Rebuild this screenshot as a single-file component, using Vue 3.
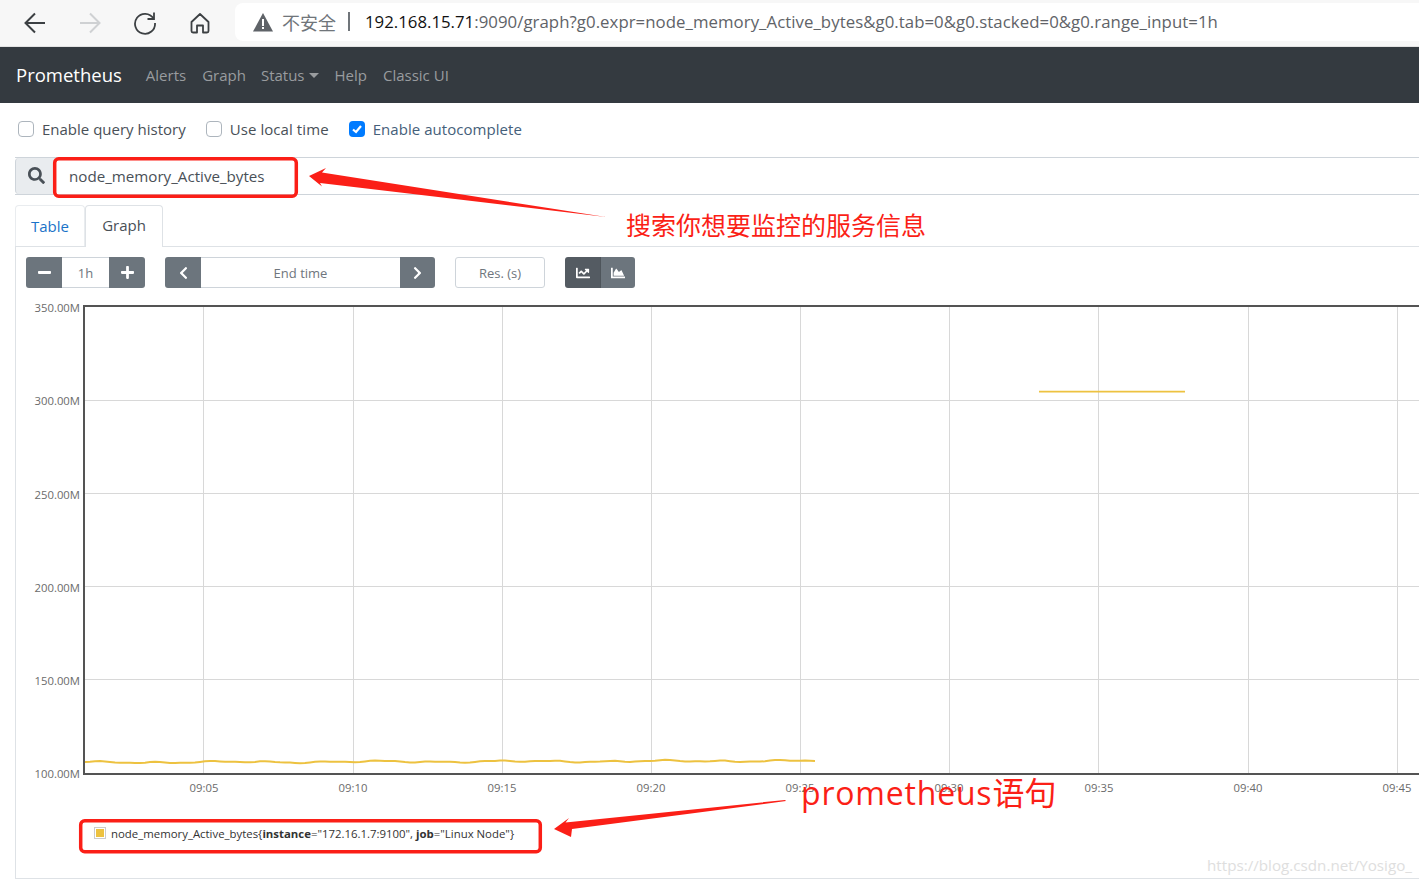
<script setup>
const gridX = [203, 353, 502, 651, 800, 949, 1098, 1248, 1397]
const gridY = [400, 493, 586, 679]
const yLabels = [
  { t: '350.00M', y: 307 }, { t: '300.00M', y: 400 }, { t: '250.00M', y: 494 },
  { t: '200.00M', y: 587 }, { t: '150.00M', y: 680 }, { t: '100.00M', y: 773 }
]
const xLabels = [
  { t: '09:05', x: 204 }, { t: '09:10', x: 353 }, { t: '09:15', x: 502 }, { t: '09:20', x: 651 },
  { t: '09:25', x: 800 }, { t: '09:30', x: 949 }, { t: '09:35', x: 1099 }, { t: '09:40', x: 1248 }, { t: '09:45', x: 1397 }
]
const pts = []
for (let x = 85; x <= 816; x += 5) {
  const rise = (x - 85) / 731 * 1.6
  const y = 762.4 - rise + 0.6 * Math.sin(x / 9) + 0.5 * Math.sin(x / 23 + 1) + 0.3 * Math.sin(x / 4.3)
  pts.push(x + ',' + y.toFixed(1))
}
const seriesPath = 'M' + pts.join(' L')
const navLinks = ['Alerts', 'Graph']
</script>

<template>
  <div class="page">
    <header class="chrome">
      <div class="chrome-btns">
        <svg class="ci" viewBox="0 0 24 24" fill="none" stroke="#3c4043" stroke-width="2"><path d="M22 12H2.500M12 2.500 2.500 12l9.500 9.500"/></svg>
        <svg class="ci" viewBox="0 0 24 24" fill="none" stroke="#cfd1d3" stroke-width="2"><path d="M2 12h19.500M12 2.500l9.500 9.500-9.500 9.500"/></svg>
        <svg class="ci" viewBox="0 0 24 24" fill="none" stroke="#3c4043" stroke-width="1.800"><path d="M20.500 7.500A10 10 0 1 0 22 12"/><path d="M21 1.500v6.500h-6.500"/></svg>
        <svg class="ci" viewBox="0 0 24 24" fill="none" stroke="#3c4043" stroke-width="1.800" stroke-linejoin="round"><path d="M3.500 11 12 3l8.500 8v9a1.500 1.500 0 0 1-1.500 1.500H15v-7H9v7H5A1.500 1.500 0 0 1 3.500 20z"/></svg>
      </div>
      <div class="omnibox">
        <svg class="warn" viewBox="0 0 20 20"><path d="M10 1 20 19.500H0z" fill="#5f6368"/><path d="M9 7h2v7H9zM9 15h2v2H9z" fill="#fff"/></svg>
        <span class="insecure">不安全</span>
        <span class="sep"></span>
        <span class="url"><span class="host">192.168.15.71</span>:9090/graph?g0.expr=node_memory_Active_bytes&amp;g0.tab=0&amp;g0.stacked=0&amp;g0.range_input=1h</span>
      </div>
    </header>

    <nav class="navbar">
      <span class="brand">Prometheus</span>
      <a v-for="l in navLinks" :key="l" class="nav-link">{{ l }}</a>
      <a class="nav-link status">Status<i class="caret"></i></a>
      <a class="nav-link">Help</a>
      <a class="nav-link">Classic UI</a>
    </nav>

    <main class="main">
      <div class="options">
        <label class="opt"><span class="box"></span>Enable query history</label>
        <label class="opt wide"><span class="box"></span>Use local time</label>
        <label class="opt on">
          <span class="box checked"><svg viewBox="0 0 16 16" width="16" height="16" fill="none" stroke="#fff" stroke-width="2.200"><path d="M4 8.500 7 11l5-6"/></svg></span>Enable autocomplete
        </label>
      </div>

      <div class="query">
        <div class="prepend">
          <svg class="fa" width="17" height="17" viewBox="0 0 512 512"><path fill="#495057" d="M505 442.700L405.300 343c-4.500-4.500-10.600-7-17-7H372c27.600-35.300 44-79.700 44-128C416 93.100 322.900 0 208 0S0 93.100 0 208s93.100 208 208 208c48.300 0 92.700-16.400 128-44v16.300c0 6.400 2.500 12.500 7 17l99.700 99.700c9.400 9.400 24.600 9.400 33.900 0l28.300-28.300c9.400-9.400 9.400-24.600.1-34zM208 336c-70.700 0-128-57.200-128-128 0-70.700 57.200-128 128-128 70.700 0 128 57.200 128 128 0 70.700-57.200 128-128 128z"/></svg>
        </div>
        <div class="expr">node_memory_Active_bytes</div>
      </div>

      <div class="tabs">
        <a class="tab">Table</a>
        <a class="tab active">Graph</a>
      </div>

      <section class="pane">
        <div class="toolbar">
          <div class="group g1">
            <button class="btn sq"><svg width="13" height="15" viewBox="0 0 448 512"><path fill="#fff" d="M416 208H32c-17.670 0-32 14.330-32 32v32c0 17.670 14.330 32 32 32h384c17.670 0 32-14.330 32-32v-32c0-17.670-14.330-32-32-32z"/></svg></button>
            <span class="field w47">1h</span>
            <button class="btn sq"><svg width="13" height="15" viewBox="0 0 448 512"><path fill="#fff" d="M416 208H272V64c0-17.670-14.330-32-32-32h-32c-17.670 0-32 14.330-32 32v144H32c-17.670 0-32 14.330-32 32v32c0 17.670 14.330 32 32 32h144v144c0 17.670 14.330 32 32 32h32c17.670 0 32-14.330 32-32V304h144c17.670 0 32-14.330 32-32v-32c0-17.670-14.330-32-32-32z"/></svg></button>
          </div>
          <div class="group g2">
            <button class="btn sq"><svg width="11" height="14" viewBox="0 0 320 512"><path fill="#fff" d="M34.520 239.030L228.870 44.690c9.370-9.370 24.570-9.370 33.940 0l22.670 22.670c9.360 9.360 9.370 24.520.04 33.900L131.490 256l154.020 154.750c9.340 9.380 9.320 24.540-.04 33.900l-22.670 22.670c-9.370 9.370-24.570 9.370-33.940 0L34.520 272.970c-9.370-9.370-9.370-24.570 0-33.940z"/></svg></button>
            <span class="field w199">End time</span>
            <button class="btn sq last"><svg width="11" height="14" viewBox="0 0 320 512"><path fill="#fff" d="M285.476 272.971L91.132 467.314c-9.373 9.373-24.569 9.373-33.941 0l-22.667-22.667c-9.357-9.357-9.375-24.522-.04-33.901L188.505 256 34.484 101.255c-9.335-9.379-9.317-24.544.04-33.901l22.667-22.667c9.373-9.373 24.569-9.373 33.941 0L285.475 239.030c9.373 9.372 9.373 24.568.001 33.941z"/></svg></button>
          </div>
          <span class="res">Res. (s)</span>
          <div class="group">
            <button class="btn mode dark"><svg width="14" height="14" viewBox="0 0 512 512"><path fill="#fff" d="M496 384H64V80c0-8.840-7.160-16-16-16H16C7.160 64 0 71.160 0 80v336c0 17.670 14.330 32 32 32h464c8.840 0 16-7.160 16-16v-32c0-8.840-7.160-16-16-16zM464 96H345.940c-21.380 0-32.090 25.850-16.970 40.970l32.400 32.400L288 242.750l-73.370-73.370c-12.500-12.500-32.760-12.500-45.250 0l-68.690 68.690c-6.250 6.250-6.250 16.380 0 22.630l22.620 22.620c6.250 6.250 16.380 6.250 22.630 0L192 237.250l73.370 73.370c12.500 12.500 32.760 12.500 45.250 0l96-96 32.400 32.400c15.120 15.120 40.970 4.410 40.970-16.970V112c.01-8.840-7.150-16-16-16z"/></svg></button>
            <button class="btn mode"><svg width="14" height="14" viewBox="0 0 512 512"><path fill="#fff" d="M500 384c6.600 0 12 5.400 12 12v40c0 6.600-5.400 12-12 12H12c-6.600 0-12-5.400-12-12V76c0-6.600 5.400-12 12-12h40c6.600 0 12 5.400 12 12v308h436zM372.700 159.500L288 216l-85.300-113.700c-5.100-6.800-15.500-6.300-19.900 1L96 248v104h384l-89.900-187.800c-3.200-6.500-11.400-8.700-17.400-4.700z"/></svg></button>
          </div>
        </div>

        <svg class="chart" viewBox="16 298 1403 512" width="1403" height="512">
          <g stroke="#d8d8d8" stroke-width="1">
            <line v-for="x in gridX" :key="'gx' + x" :x1="x + 0.5" :x2="x + 0.5" y1="306" y2="774" />
            <line v-for="y in gridY" :key="'gy' + y" x1="84" x2="1419" :y1="y + 0.5" :y2="y + 0.5" />
          </g>
          <path :d="seriesPath" fill="none" stroke="#edc240" stroke-width="2" />
          <line x1="1039" x2="1185" y1="391.700" y2="391.700" stroke="#edc240" stroke-width="1.800" />
          <path d="M1419 306H84V774H1419" fill="none" stroke="#545454" stroke-width="2" />
          <g class="tick">
            <text v-for="l in yLabels" :key="l.t" x="80" :y="l.y + 5" text-anchor="end">{{ l.t }}</text>
            <text v-for="l in xLabels" :key="l.t" :x="l.x" y="791.500" text-anchor="middle">{{ l.t }}</text>
          </g>
        </svg>

        <div class="legend">
          <span class="swatch"><i></i></span>
          <span class="series">node_memory_Active_bytes{<b>instance</b>="172.16.1.7:9100", <b>job</b>="Linux Node"}</span>
        </div>
      </section>
    </main>

    <svg class="marks" width="1419" height="884" viewBox="0 0 1419 884">
      <g fill="none" stroke="#fb1f17" stroke-width="3.500">
        <rect x="54.700" y="158.700" width="241.600" height="37.600" rx="4" />
        <rect x="80.700" y="820.700" width="459.600" height="31" rx="4" />
      </g>
      <g fill="#fb1f17">
        <path d="M309 176 326 168 322 172.500 606 217 320 183 322 186.500z" />
        <path d="M554 829 569 818 565.500 822.500 785 800 786 801 572 829 571 837z" />
      </g>
    </svg>
    <div class="note n1">搜索你想要监控的服务信息</div>
    <div class="note n2"><span class="latin">prometheus</span>语句</div>
    <div class="watermark">https://blog.csdn.net/Yosigo_</div>
  </div>
</template>

<style>
html, body { margin: 0; overflow: hidden; background: #fff; }
</style>

<style scoped>
.page {
  position: relative;
  width: 1419px;
  height: 884px;
  overflow: hidden;
  background: #fff;
  color: #495057;
  font-family: "Open Sans", "Noto Sans CJK SC", sans-serif;
  font-size: 15px;
}
.chrome {
  height: 46px;
  background: #f7f7f7;
  border-bottom: 1px solid #e3e3e3;
  display: flex;
  align-items: center;
}
.chrome-btns {
  width: 235px;
  display: flex;
  gap: 31px;
  padding-left: 23px;
  box-sizing: border-box;
}
.ci { width: 24px; height: 24px; flex: none; }
.omnibox {
  flex: 1;
  height: 38px;
  margin-top: -3px;
  background: #fff;
  border-radius: 8px 0 0 8px;
  display: flex;
  align-items: center;
  padding-left: 18px;
}
.warn { width: 20px; height: 20px; flex: none; }
.insecure { margin-left: 9px; font-size: 18px; color: #70757a; }
.sep { width: 2px; height: 19px; background: #70757a; margin: 0 15px 0 12px; }
.url { font-size: 16.800px; color: #5f6368; white-space: nowrap; letter-spacing: 0.050px; }
.host { color: #111; letter-spacing: 0; }

.navbar {
  height: 56px;
  background: #343a40;
  display: flex;
  align-items: center;
  padding-left: 16px;
  gap: 16px;
}
.brand { color: #fff; font-size: 18.500px; margin-right: 8px; padding-bottom: 2px; }
.nav-link { color: #999c9f; font-size: 15px; display: inline-flex; align-items: center; }
.status { margin-left: -1px; }
.caret {
  width: 0;
  height: 0;
  margin-left: 4px;
  border-left: 5px solid transparent;
  border-right: 5px solid transparent;
  border-top: 5px solid #999c9f;
}

.main { padding-left: 15px; }
.options {
  height: 52px;
  padding: 0 0 2px 3px;
  display: flex;
  align-items: center;
  gap: 20px;
}
.opt { display: flex; align-items: center; gap: 8px; font-size: 15px; white-space: nowrap; }
.opt.wide { letter-spacing: 0.080px; }
.opt.on { color: #45607a; letter-spacing: 0.050px; }
.box {
  width: 16px;
  height: 16px;
  box-sizing: border-box;
  border: 1px solid #adb5bd;
  border-radius: 4px;
  background: #fff;
  display: block;
  flex: none;
}
.box.checked { background: #007bff; border: 0; }
.box svg { display: block; }

.query {
  height: 38px;
  box-sizing: border-box;
  display: flex;
  border-top: 1px solid #ced4da;
  border-bottom: 1px solid #ced4da;
}
.prepend {
  width: 40px;
  padding: 0 0 1px 2px;
  background: #e9ecef;
  border-left: 1px solid #ced4da;
  border-radius: 4px 0 0 4px;
  display: flex;
  align-items: center;
  justify-content: center;
  box-sizing: border-box;
}
.expr { padding-left: 14px; line-height: 36px; font-size: 15.150px; }

.tabs {
  margin-top: 10px;
  height: 42px;
  box-sizing: border-box;
  border-bottom: 1px solid #dee2e6;
  display: flex;
}
.tab {
  width: 70px;
  height: 41px;
  padding: 0 0 1px;
  box-sizing: border-box;
  border: 1px solid #e9ecef;
  border-bottom: 0;
  border-radius: 4px 4px 0 0;
  display: flex;
  align-items: center;
  justify-content: center;
  font-size: 15px;
  color: #1a73c8;
}
.tab.active {
  width: 78px;
  height: 42px;
  padding: 0 0 3px;
  border-color: #dee2e6;
  background: #fff;
  color: #495057;
}

.pane {
  position: relative;
  height: 632px;
  box-sizing: border-box;
  border-left: 1px solid #dee2e6;
  border-bottom: 1px solid #dee2e6;
}
.toolbar {
  display: flex;
  padding: 10px 0 0 10px;
  height: 31px;
}
.group { display: flex; border-radius: 3px; overflow: hidden; }
.g1 { margin-right: 20px; }
.g2 { margin-right: 20px; }
.btn {
  border: 0;
  padding: 0;
  height: 31px;
  background: #6c757d;
  display: flex;
  align-items: center;
  justify-content: center;
}
.sq { width: 36px; }
.sq.last { width: 35px; }
.mode { width: 34px; }
.mode.dark { width: 36px; background: #545b62; border-right: 1px solid #4e555b; box-sizing: border-box; }
.field {
  height: 31px;
  box-sizing: border-box;
  border-top: 1px solid #ced4da;
  border-bottom: 1px solid #ced4da;
  display: flex;
  align-items: center;
  justify-content: center;
  font-size: 13px;
  color: #6f767d;
}
.w47 { width: 47px; }
.w199 { width: 199px; }
.res {
  width: 90px;
  height: 31px;
  box-sizing: border-box;
  margin-right: 20px;
  border: 1px solid #ced4da;
  border-radius: 3px;
  display: flex;
  align-items: center;
  justify-content: center;
  font-size: 13px;
  color: #6f767d;
}
.chart { display: block; margin-top: 10px; }
.tick { font-size: 11.300px; fill: #6b6b6b; }
.legend {
  display: flex;
  align-items: center;
  height: 34px;
  margin-top: 7px;
  padding-left: 78px;
  font-size: 11.400px;
  color: #333;
}
.swatch {
  width: 12px;
  height: 12px;
  box-sizing: border-box;
  border: 1px solid #ccc;
  padding: 1px;
  margin: -3px 5px 0 0;
}
.swatch i { display: block; width: 8px; height: 8px; background: #edc240; }
.series { white-space: nowrap; margin-top: -2px; }
.series b { font-weight: 700; }

.marks { position: absolute; left: 0; top: 0; pointer-events: none; }
.note { position: absolute; color: #fb1f17; white-space: nowrap; font-family: "Noto Sans CJK SC", sans-serif; }
.n1 { left: 626px; top: 206px; font-size: 25px; line-height: 36px; }
.n2 { left: 801px; top: 768px; font-size: 32px; line-height: 46px; }
.latin { font-family: "Open Sans", sans-serif; letter-spacing: 0.800px; }
.watermark {
  position: absolute;
  left: 1207px;
  top: 854px;
  font-size: 15.200px;
  line-height: 22px;
  color: #dedede;
  white-space: nowrap;
}
</style>
